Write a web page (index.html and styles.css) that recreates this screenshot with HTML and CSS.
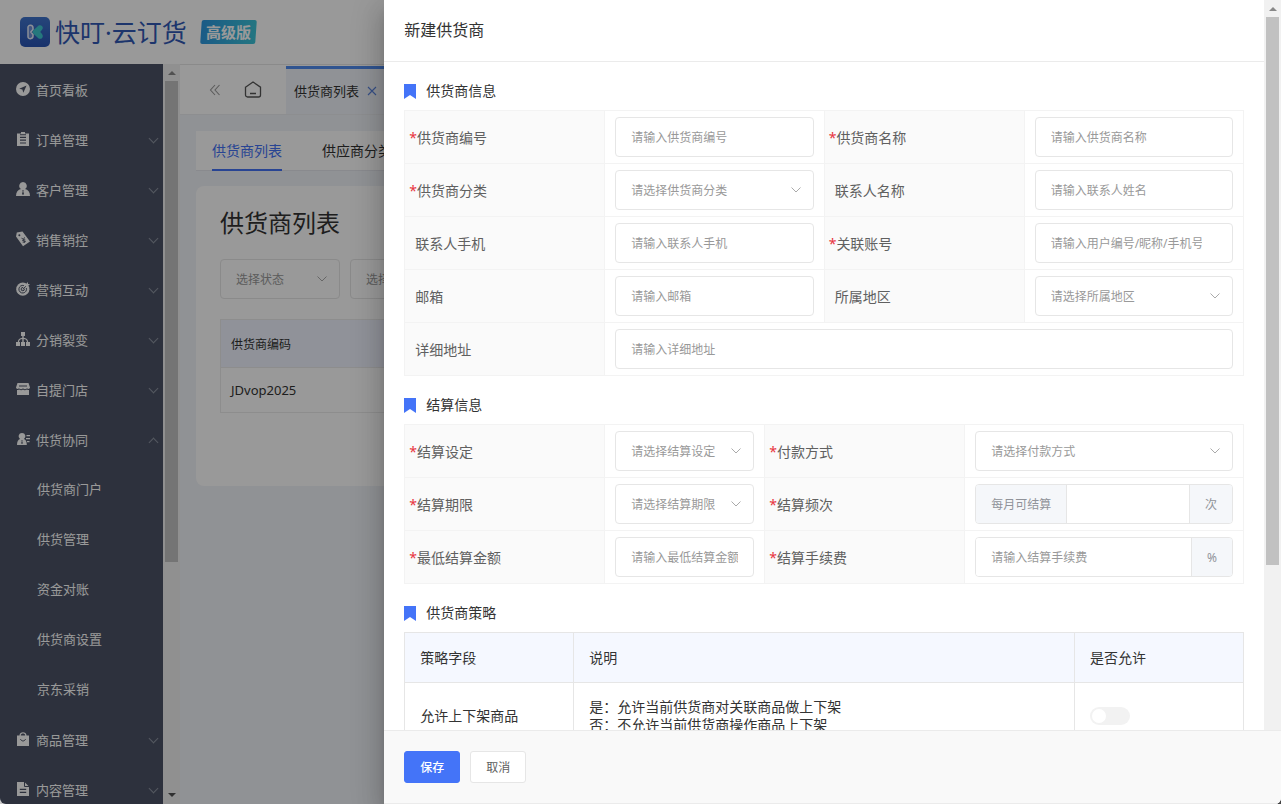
FILE: index.html
```html
<!DOCTYPE html>
<html lang="zh-CN">
<head>
  <meta charset="UTF-8">
  <meta name="viewport" content="width=device-width, initial-scale=1.0">
  <title>新建供货商</title>
  <link rel="stylesheet" href="styles.css">
</head>
<body>
  <div class="app">
    <header class="topbar">
      <svg class="logo" viewBox="0 0 30 30">
        <defs>
          <linearGradient id="logo-bg" x1="0" y1="0" x2="0" y2="1">
            <stop offset="0" stop-color="#3f74cc"/>
            <stop offset="1" stop-color="#2a55b4"/>
          </linearGradient>
        </defs>
        <rect width="30" height="30" rx="5" fill="url(#logo-bg)"/>
        <path d="M8 10.200C8 7.600 13 7.600 13 11v1.500L10.800 15l2.200 2.500V19c0 3.400-5 3.400-5 .8z" fill="#6f90d8" stroke="#e8eefb" stroke-width="1.500" stroke-linejoin="round"/>
        <path d="M18.600 8.600c1.800-1.200 4.200.2 4.200 2.200 0 1.600-1.200 2.600-2.600 4.200 1.400 1.600 2.600 2.600 2.600 4.200 0 2-2.400 3.400-4.200 2.200l-5.200-4.600c-1.100-1-1.100-2.600 0-3.600z" fill="#3fc8d0"/>
      </svg>
      <span class="brand">快叮·云订货</span>
      <span class="edition"><span>高级版</span></span>
    </header>

    <div class="layout">
      <nav class="sidebar">
        <a class="menu-item" href="#">
          <svg class="menu-icon" viewBox="0 0 14 14"><path fill-rule="evenodd" d="M7 0a7 7 0 1 1 0 14A7 7 0 0 1 7 0zm3.600 3.600L3.200 6.700l3.200.9.900 3.200z"/></svg>
          首页看板
        </a>
        <a class="menu-item has-sub" href="#">
          <svg class="menu-icon" viewBox="0 0 14 14"><path fill-rule="evenodd" d="M5 0h4v1.500h4V14H1V1.500h4zM4 4.800v1.200h6V4.800zm0 2.800v1.200h6V7.600zm0 2.800v1.200h6v-1.200zM4 2.200v1h6v-1z"/></svg>
          订单管理
        </a>
        <a class="menu-item has-sub" href="#">
          <svg class="menu-icon" viewBox="0 0 14 14"><path fill-rule="evenodd" d="M7 0a3.800 3.800 0 0 1 2 7c3 .8 5 3 5 7H0c0-4 2-6.200 5-7a3.800 3.800 0 0 1 2-7zm-.8 8.300l.5 1.200-.7 2.500 1 1 1-1-.7-2.500.5-1.200z"/></svg>
          客户管理
        </a>
        <a class="menu-item has-sub" href="#">
          <svg class="menu-icon" viewBox="0 0 14 14"><path fill-rule="evenodd" d="M.8.500L6.500-.500l7.500 10-7 4.800L0 4.500zM3.300 2.300a1 1 0 1 0 .1 2 1 1 0 0 0-.1-2z"/><path class="cut" d="M5.500 6.200l2 1.200 1-2M7.500 7.400l1.200 3.400M6.200 8.800l3-1.200M6.800 10.400l3-1.200"/></svg>
          销售销控
        </a>
        <a class="menu-item has-sub" href="#">
          <svg class="menu-icon" viewBox="0 0 14 14"><circle cx="6.800" cy="7.200" r="6.600"/><path class="cut" d="M10.300 6a3.800 3.800 0 1 1-2.400-2.400M8.300 6.800a1.600 1.600 0 1 1-1.100-1.200M7 7.200L10 4"/><path d="M9.500 2.500L12 0v2h2l-2.500 2.500h-2z"/></svg>
          营销互动
        </a>
        <a class="menu-item has-sub" href="#">
          <svg class="menu-icon" viewBox="0 0 14 14"><path d="M5 0h4v4H7.700v1.800c2.600.2 4.300 1.600 4.500 4.200H14v4h-4v-4h1c-.2-1.800-1.300-2.900-3.300-3V10H9v4H5v-4h1.300V7C4.300 7.100 3.200 8.200 3 10h1v4H0v-4h1.800C2 7.400 3.700 6 6.300 5.800V4H5z"/></svg>
          分销裂变
        </a>
        <a class="menu-item has-sub" href="#">
          <svg class="menu-icon" viewBox="0 0 14 14"><path d="M1.500 1h11L14 5.500c0 1.500-2 2-3 .8-.9 1.200-3.100 1.200-4 0-.9 1.200-3.100 1.200-4 0C2 7.500 0 7 0 5.500zM1 8c1 .3 1.700 0 2.200-.4 1 .8 2.800.8 3.800 0 1 .8 2.800.8 3.800 0 .5.4 1.200.7 2.200.4v5H1z"/><path class="cut" d="M3 4h8"/></svg>
          自提门店
        </a>
        <a class="menu-item has-sub open" href="#">
          <svg class="menu-icon" viewBox="0 0 14 14"><path fill-rule="evenodd" d="M6 1a3.300 3.300 0 0 1 2 6c1.800.8 2.800 2.500 2.800 6H1c0-3.500 1-5.200 3-6a3.300 3.300 0 0 1 2-6zM5.400 8l.4 1-.6 2.200.8.8.8-.8L6.200 9l.4-1zM10.500 3H14v1.200h-3.500zm-.5 3h4v1.200h-4zm1 3h2.500v1.200H11z"/></svg>
          供货协同
        </a>
        <div class="submenu">
          <a href="#">供货商门户</a>
          <a href="#">供货管理</a>
          <a href="#">资金对账</a>
          <a href="#">供货商设置</a>
          <a href="#">京东采销</a>
        </div>
        <a class="menu-item has-sub" href="#">
          <svg class="menu-icon" viewBox="0 0 14 14"><path fill-rule="evenodd" d="M3.500 3.500C3.500-.8 10.500-.8 10.500 3.500H13V14H1V3.500zm1.300 0h4.400c0-2.600-4.400-2.600-4.400 0z"/><path class="cut" d="M4.500 7c.6 2.600 4.400 2.600 5 0"/></svg>
          商品管理
        </a>
        <a class="menu-item has-sub" href="#">
          <svg class="menu-icon" viewBox="0 0 14 14"><path fill-rule="evenodd" d="M1 0h7.500L13 4.500V14H1zM3.800 6.800V8h6.400V6.800zm0 3V11h6.400V9.800z"/><path class="cut" d="M8.500 0v4.500H13"/></svg>
          内容管理
        </a>
      </nav>
      <div class="scrollbar side-scroll">
        <i class="arrow up"></i>
        <div class="thumb"></div>
        <i class="arrow down"></i>
      </div>

      <main class="main">
        <div class="page-tabs">
          <button class="icon-btn" aria-label="收起">
            <svg width="12" height="12" viewBox="0 0 12 12"><path d="M6 1L1.500 6 6 11M10.500 1L6 6l4.500 5" fill="none" stroke="#999" stroke-width="1.100"/></svg>
          </button>
          <button class="icon-btn home" aria-label="首页">
            <svg width="18" height="18" viewBox="0 0 18 18"><path d="M1.500 6.200L9 1l7.500 5.200V14a2 2 0 0 1-2 2h-11a2 2 0 0 1-2-2zM6 12.500h6" fill="none" stroke="#555" stroke-width="1.300"/></svg>
          </button>
          <a class="page-tab" href="#">供货商列表
            <svg width="10" height="10" viewBox="0 0 10 10"><path d="M1 1l8 8M9 1L1 9" stroke="#5b86e0" stroke-width="1.100"/></svg>
          </a>
        </div>
        <div class="content">
          <div class="sub-tabs">
            <a class="active" href="#">供货商列表</a>
            <a href="#">供应商分类</a>
          </div>
          <section class="card">
            <h1>供货商列表</h1>
            <div class="filters">
              <select class="control" aria-label="选择状态"><option>选择状态</option></select>
              <select class="control" aria-label="选择分类"><option>选择分类</option></select>
            </div>
            <table class="list-table">
              <tr><th>供货商编码</th><th>供货商名称</th></tr>
              <tr><td>JDvop2025</td><td></td></tr>
            </table>
          </section>
        </div>
      </main>
    </div>

    <div class="mask"></div>

    <aside class="drawer">
      <div class="drawer-body">
        <div class="drawer-scroll">
          <h2 class="drawer-title">新建供货商</h2>
          <div class="drawer-content">
            <h3 class="section-title"><svg width="12" height="15" viewBox="0 0 12 15"><path d="M0 0h12v15l-6-4-6 4z"/></svg>供货商信息</h3>
            <table class="form-table">
              <colgroup><col class="col-label"><col><col class="col-label"><col></colgroup>
              <tr>
                <th class="required"><label for="code">供货商编号</label></th>
                <td><input class="control" id="code" type="text" placeholder="请输入供货商编号"></td>
                <th class="required"><label for="name">供货商名称</label></th>
                <td><input class="control" id="name" type="text" placeholder="请输入供货商名称"></td>
              </tr>
              <tr>
                <th class="required"><label for="category">供货商分类</label></th>
                <td><select class="control" id="category"><option>请选择供货商分类</option></select></td>
                <th><label for="contact">联系人名称</label></th>
                <td><input class="control" id="contact" type="text" placeholder="请输入联系人姓名"></td>
              </tr>
              <tr>
                <th><label for="phone">联系人手机</label></th>
                <td><input class="control" id="phone" type="text" placeholder="请输入联系人手机"></td>
                <th class="required"><label for="account">关联账号</label></th>
                <td><input class="control with-suffix" id="account" type="text" placeholder="请输入用户编号/昵称/手机号"></td>
              </tr>
              <tr>
                <th><label for="email">邮箱</label></th>
                <td><input class="control" id="email" type="text" placeholder="请输入邮箱"></td>
                <th><label for="region">所属地区</label></th>
                <td><select class="control" id="region"><option>请选择所属地区</option></select></td>
              </tr>
              <tr>
                <th><label for="address">详细地址</label></th>
                <td colspan="3"><input class="control" id="address" type="text" placeholder="请输入详细地址"></td>
              </tr>
            </table>

            <h3 class="section-title"><svg width="12" height="15" viewBox="0 0 12 15"><path d="M0 0h12v15l-6-4-6 4z"/></svg>结算信息</h3>
            <table class="form-table">
              <colgroup><col class="col-label"><col class="col-short"><col class="col-label"><col></colgroup>
              <tr>
                <th class="required"><label for="settle">结算设定</label></th>
                <td><select class="control" id="settle"><option>请选择结算设定</option></select></td>
                <th class="required"><label for="pay">付款方式</label></th>
                <td><select class="control" id="pay"><option>请选择付款方式</option></select></td>
              </tr>
              <tr>
                <th class="required"><label for="period">结算期限</label></th>
                <td><select class="control" id="period"><option>请选择结算期限</option></select></td>
                <th class="required"><label for="times">结算频次</label></th>
                <td><div class="input-group"><span>每月可结算</span><input id="times" type="text"><span>次</span></div></td>
              </tr>
              <tr>
                <th class="required"><label for="min">最低结算金额</label></th>
                <td><input class="control" id="min" type="text" placeholder="请输入最低结算金额"></td>
                <th class="required"><label for="fee">结算手续费</label></th>
                <td><div class="input-group"><input id="fee" type="text" placeholder="请输入结算手续费"><span>%</span></div></td>
              </tr>
            </table>

            <h3 class="section-title"><svg width="12" height="15" viewBox="0 0 12 15"><path d="M0 0h12v15l-6-4-6 4z"/></svg>供货商策略</h3>
            <table class="policy-table">
              <colgroup><col class="col-side"><col><col class="col-side"></colgroup>
              <tr><th>策略字段</th><th>说明</th><th>是否允许</th></tr>
              <tr>
                <td>允许上下架商品</td>
                <td>是：允许当前供货商对关联商品做上下架<br>否：不允许当前供货商操作商品上下架</td>
                <td><input class="switch" type="checkbox" aria-label="允许上下架商品"></td>
              </tr>
            </table>
          </div>
        </div>
        <div class="scrollbar drawer-bar">
          <i class="arrow up"></i>
          <div class="thumb"></div>
        </div>
      </div>
      <footer class="drawer-footer">
        <button class="btn primary">保存</button>
        <button class="btn">取消</button>
      </footer>
    </aside>
  </div>
</body>
</html>
```
FILE: styles.css
```css
* {
  box-sizing: border-box;
}
body {
  margin: 0;
  font-family: "Noto Sans", "Noto Sans CJK SC", sans-serif;
  font-size: 14px;
  color: #333;
  background: linear-gradient(90deg, #ccc, #444);
}
a {
  color: inherit;
  text-decoration: none;
}
button, input, select {
  font-family: inherit;
}
h1, h2, h3 {
  margin: 0;
  font-weight: 400;
}
table {
  width: 100%;
  border-collapse: collapse;
}
th {
  font-weight: 400;
  text-align: left;
}
.app {
  position: relative;
  display: flex;
  flex-direction: column;
  height: 100vh;
  overflow: hidden;
  border-radius: 0 0 6px 6px;
  background: #f0f3f8;
}

/* top bar */
.topbar {
  display: flex;
  align-items: center;
  flex: none;
  height: 64px;
  padding-left: 20px;
  background: #fff;
}
.logo {
  width: 30px;
  height: 30px;
  margin-right: 5px;
}
.brand {
  font-size: 25px;
  line-height: 30px;
  color: #3159b5;
}
.edition {
  margin-left: 14px;
  padding: 0 5px;
  border-radius: 2px;
  background: linear-gradient(90deg, #2c98e0, #3cc4d8);
  color: #fff;
  font-size: 15px;
  font-weight: 700;
  line-height: 24px;
  transform: skewX(-4deg);
}
.edition span {
  display: block;
  transform: skewX(4deg);
}

/* sidebar */
.layout {
  display: flex;
  flex: 1;
  min-height: 0;
}
.sidebar {
  width: 163px;
  flex: none;
  overflow: hidden;
  background: #4c5366;
  color: #fff;
  font-size: 13px;
}
.menu-item {
  position: relative;
  display: flex;
  align-items: center;
  gap: 6px;
  height: 50px;
  padding-left: 16px;
}
.menu-icon {
  width: 14px;
  height: 14px;
  overflow: visible;
  fill: #fff;
}
.menu-icon .cut {
  fill: none;
  stroke: #4c5366;
  stroke-width: 1;
}
.has-sub::after {
  content: "";
  position: absolute;
  right: 6px;
  top: 21px;
  width: 6px;
  height: 6px;
  border: solid #8d93a1;
  border-width: 0 1px 1px 0;
  transform: rotate(45deg);
}
.has-sub.open::after {
  top: 25px;
  transform: rotate(225deg);
}
.submenu a {
  display: block;
  padding-left: 37px;
  line-height: 50px;
}

/* scrollbars */
.scrollbar {
  display: flex;
  flex-direction: column;
  align-items: center;
  flex: none;
  width: 17px;
  background: #f1f1f1;
}
.thumb {
  width: 13px;
  background: #c1c1c1;
}
.arrow {
  border: 4px solid transparent;
}
.arrow.up {
  margin: 3px 0 6px;
  border-bottom-color: #888;
}
.arrow.down {
  margin: auto 0 3px;
  border-top-color: #505050;
}
.side-scroll .thumb {
  height: 65%;
}
.drawer-bar .thumb {
  height: 75%;
}

/* page behind the drawer */
.main {
  flex: 1;
  min-width: 0;
  border-top: 1px solid #e6e6e6;
}
.page-tabs {
  display: flex;
  height: 50px;
  background: #fff;
  border-bottom: 1px solid #ebedf0;
}
.icon-btn {
  display: flex;
  align-items: center;
  justify-content: center;
  width: 38px;
  margin-left: 16px;
  padding: 0;
  border: 0;
  background: none;
}
.icon-btn.home {
  margin: 0 14px 0 0;
}
.page-tab {
  display: flex;
  align-items: center;
  gap: 8px;
  margin-top: 1px;
  padding: 0 8px 2px;
  border-top: 3px solid #508cf0;
  background: #f0f4fb;
  font-size: 13px;
}
.content {
  padding: 16px;
}
.sub-tabs {
  display: flex;
  gap: 40px;
  height: 40px;
  padding: 0 16px;
  background: #fff;
  border-bottom: 1px solid #e4e7ed;
  line-height: 39px;
}
.sub-tabs .active {
  height: 40px;
  border-bottom: 2px solid #4372f5;
  color: #4372f5;
}
.card {
  height: 300px;
  margin-top: 15px;
  padding: 21px 24px;
  border-radius: 8px;
  background: #fff;
}
.card h1 {
  margin-bottom: 20px;
  font-size: 24px;
  line-height: 32px;
}
.filters {
  display: flex;
  gap: 10px;
  margin-bottom: 20px;
}
.filters .control {
  width: 120px;
}
.list-table {
  font-size: 13px;
}
.list-table th,
.list-table td {
  width: 161px;
  height: 45px;
  padding: 0 10px;
  border: 1px solid #ebebeb;
}
.list-table th {
  height: 48px;
  background: #f0f3ff;
  font-size: 12px;
}
.mask {
  position: absolute;
  inset: 0;
  background: rgba(0, 0, 0, 0.4);
}

/* drawer */
.drawer {
  position: absolute;
  top: 0;
  right: 0;
  bottom: 0;
  display: flex;
  flex-direction: column;
  width: 70%;
  background: #fff;
  box-shadow: 0 8px 10px -5px rgba(0, 0, 0, 0.2), 0 16px 24px 2px rgba(0, 0, 0, 0.14), 0 6px 30px 5px rgba(0, 0, 0, 0.12);
}
.drawer-body {
  display: flex;
  flex: 1;
  min-height: 0;
}
.drawer-scroll {
  flex: 1;
  min-width: 0;
  overflow: hidden;
}
.drawer-title {
  padding: 0 20px;
  border-bottom: 1px solid #ebebeb;
  font-size: 16px;
  line-height: 61px;
}
.drawer-content {
  padding: 0 20px;
}
.section-title {
  display: flex;
  align-items: center;
  gap: 10px;
  padding: 20px 0 10px;
  font-size: 14px;
  line-height: 18px;
}
.section-title svg {
  fill: #4474f8;
}
.form-table,
.policy-table {
  table-layout: fixed;
}
.form-table th,
.form-table td {
  padding: 6px 10px;
  border: 1px solid #f3f3f3;
}
.form-table th {
  background: #fafafa;
  color: #606060;
}
.form-table .required {
  padding-left: 4px;
}
.required::before {
  content: "*";
  color: #e8343f;
}
.col-label {
  width: 200px;
}
.col-short {
  width: 160px;
}
.col-side {
  width: 169px;
}
.control {
  display: block;
  width: 100%;
  height: 40px;
  padding: 0 15px;
  border: 1px solid #e6e6e6;
  border-radius: 4px;
  background: #fff;
  color: #999;
  font-size: 12px;
}
.with-suffix {
  padding-right: 30px;
}
select.control {
  appearance: none;
  padding-right: 30px;
  background: #fff url("data:image/svg+xml,%3Csvg xmlns='http://www.w3.org/2000/svg' width='10' height='6'%3E%3Cpath d='M.5.500L5 5 9.500.500' fill='none' stroke='%23aaa'/%3E%3C/svg%3E") no-repeat right 12px center;
}
::placeholder {
  color: #999;
  opacity: 1;
}
.input-group {
  display: flex;
  height: 40px;
  overflow: hidden;
  border: 1px solid #e6e6e6;
  border-radius: 4px;
  font-size: 12px;
  line-height: 39px;
}
.input-group span {
  padding: 0 15px;
  background: #f5f7fa;
  color: #909399;
}
.input-group input {
  flex: 1;
  min-width: 0;
  padding: 0 15px;
  border: 0;
  font-size: 12px;
}
.input-group span + input,
.input-group input + span {
  border-left: 1px solid #e6e6e6;
}
.policy-table th,
.policy-table td {
  padding: 15px;
  border: 1px solid #e6e6e6;
  line-height: 18px;
}
.policy-table th {
  height: 50px;
  background: #f5f8ff;
}
.switch {
  display: block;
  appearance: none;
  width: 40px;
  height: 18px;
  margin: 0;
  padding: 2px;
  border-radius: 9px;
  background: #f2f2f2;
}
.switch::before {
  content: "";
  display: block;
  width: 14px;
  height: 14px;
  border-radius: 50%;
  background: #fff;
}
.switch:checked {
  background: #4474f8;
}
.drawer-footer {
  display: flex;
  gap: 10px;
  padding: 20px;
  border: solid #ebebeb;
  border-width: 1px 0;
  background: #f9f9f9;
}
.btn {
  height: 32px;
  padding: 0 15px;
  border: 1px solid #e6e6e6;
  border-radius: 3px;
  background: #fff;
  color: #606060;
  font-size: 12px;
}
.btn.primary {
  border-color: #4474f8;
  background: #4474f8;
  color: #fff;
  font-weight: 500;
}
```
